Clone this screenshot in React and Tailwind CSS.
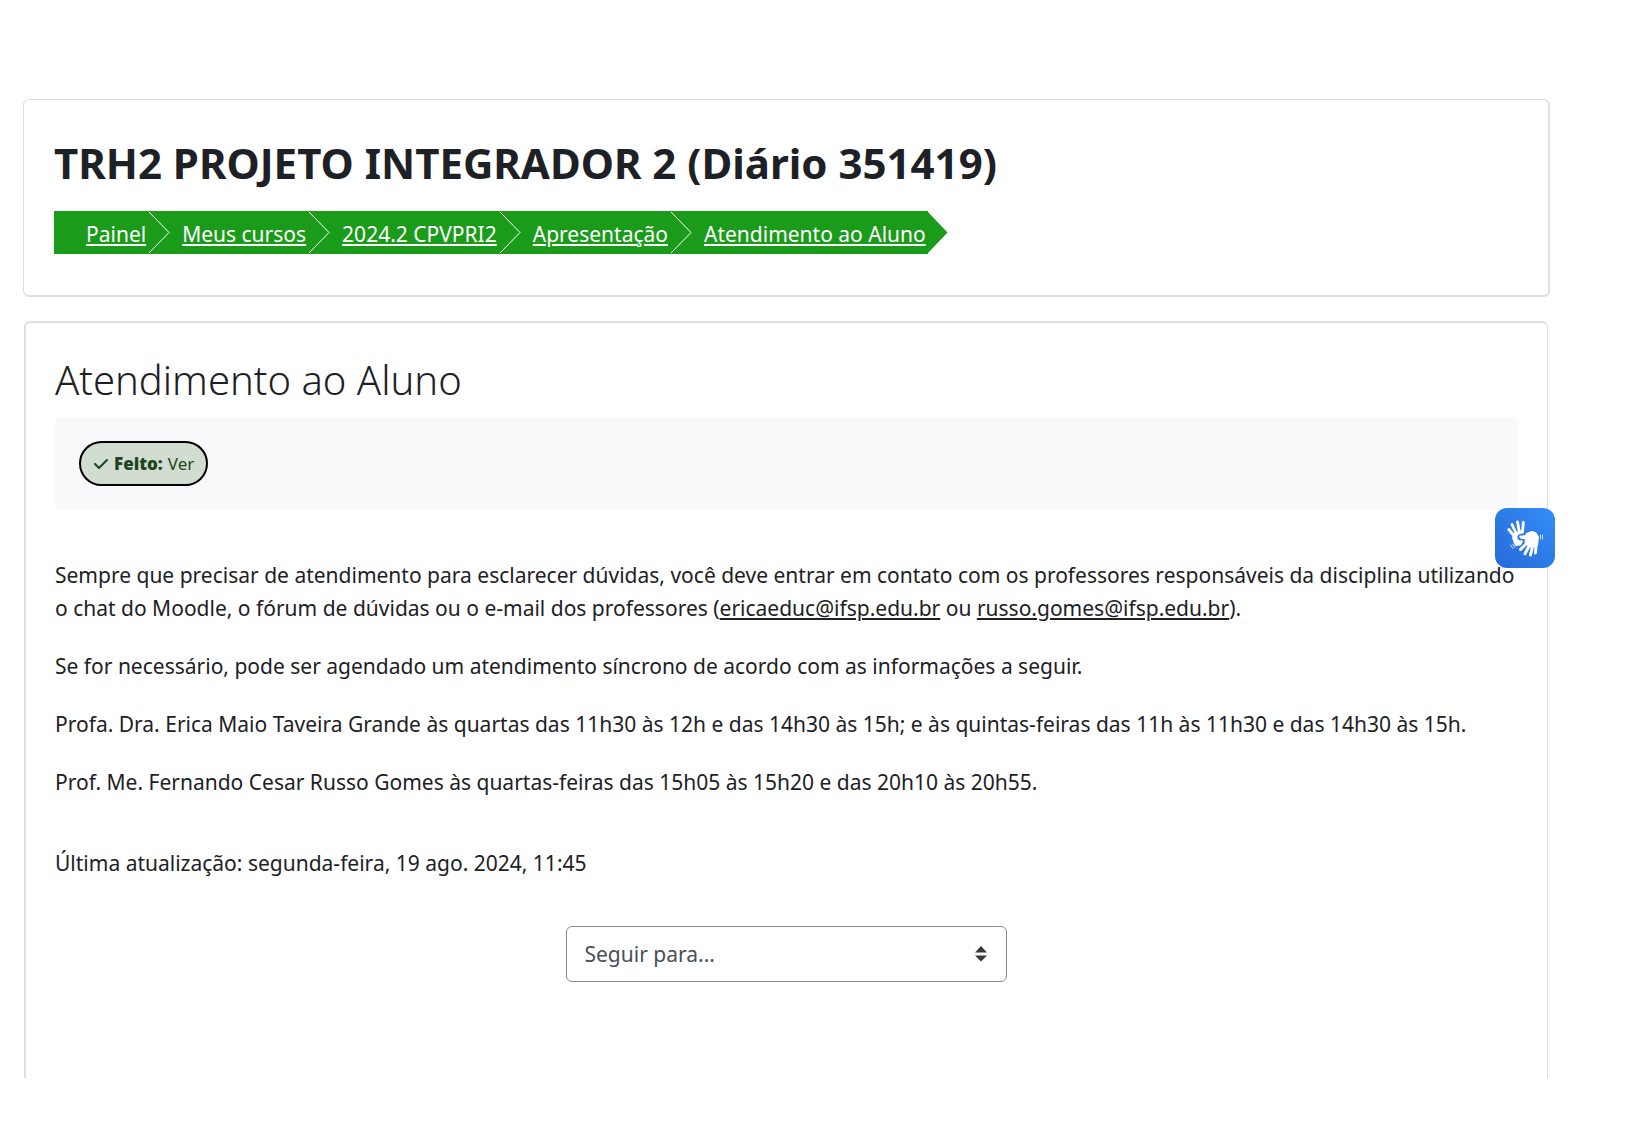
import { FaCheck } from "react-icons/fa6";

const crumbs = [
  "Painel",
  "Meus cursos",
  "2024.2 CPVPRI2",
  "Apresentação",
  "Atendimento ao Aluno",
];

const Breadcrumb = () => (
  <nav aria-label="Navegação" className="mt-[19px]">
    <ol className="flex">
      {crumbs.map((label, i) => (
        <li
          key={label}
          className={`flex h-[43px] bg-[#1a9c1a] text-white ${
            i === 0 ? "pl-8" : "pl-3"
          }`}
        >
          <a href="#" className="pt-[7px] underline">
            {label}
          </a>
          {i < crumbs.length - 1 ? (
            <svg width="21" height="43" viewBox="0 0 21 43" className="ml-[3px]">
              <path d="M0 1L20 21.5L0 42" fill="none" stroke="#fff" />
            </svg>
          ) : (
            <svg width="22" height="43" viewBox="0 0 22 43" className="-mr-5.5">
              <path d="M0 0H2V1L21.500 21.500L2 42V43H0z" fill="#1a9c1a" />
            </svg>
          )}
        </li>
      ))}
    </ol>
  </nav>
);

const CompletionInfo = () => (
  <div className="mt-3 flex rounded-md bg-[#f8f9fb] p-6">
    <span className="inline-flex h-[45px] items-center gap-[5px] rounded-full border-2 border-black bg-[#d2ddd2] px-3 text-[17px] text-[#1d4620]">
      <FaCheck className="text-base" />
      <strong className="font-black">Feito:</strong>
      <span>Ver</span>
    </span>
  </div>
);

const HandsIcon = () => (
  <svg
    viewBox="0 0 60 60"
    className="size-full"
    fill="none"
    strokeLinecap="round"
    strokeLinejoin="round"
  >
    <g stroke="#fff" strokeWidth="2.800">
      <path d="M13.800 21.500L20 29M17 16.500L21.500 26M22.500 13.800L24.500 25M28.300 14.500L27.500 25" />
      <path
        d="M20 26L27.500 23L28 30L25 36L21 36.500L18.500 30z"
        fill="#fff"
      />
    </g>
    <path
      d="M24.500 28.500L33 26L38 24L42.500 28L42 34L33 37L30 31L24.500 30z"
      stroke="#2b78e4"
      strokeWidth="4"
    />
    <g stroke="#fff" strokeWidth="3">
      <path d="M25.500 41.500L33 34M30 45.800L35 36M35.500 47L38 36M40.500 45L41 35" />
      <path
        d="M32 26.500L37 24.500L40.500 26L42.500 29L41.500 37L35 38L31 34L32 31z"
        fill="#fff"
      />
      <path
        d="M25 28.500L33 27.500L32 31L26 30z"
        fill="#fff"
        strokeWidth="1.500"
      />
    </g>
    <g stroke="#cfe2ff" strokeWidth="1">
      <path d="M45.500 27V31M47.500 27V31M15.500 37L18 40.500M17.500 36L20 39.500" />
    </g>
  </svg>
);

const JumpTo = () => (
  <div className="relative mx-auto mt-[46px] w-[441px]">
    <select
      aria-label="Seguir para..."
      className="block h-14 w-full appearance-none rounded-md border border-[#848b94] bg-white px-[18px] text-[#495057]"
    >
      <option>Seguir para...</option>
    </select>
    <svg
      viewBox="0 0 12 16"
      className="pointer-events-none absolute right-5 top-5 h-4 w-3"
      fill="#343a40"
    >
      <path d="M6 0L12 6.500H0zM6 15.500L0 9.500H12z" />
    </svg>
  </div>
);

const App = () => {
  return (
    <div className="bg-white pl-[23px] pr-[77px] pt-[99px] font-['Noto_Sans',sans-serif] text-[21px] leading-[33px] text-[#1d2125]">
      <header className="rounded-md border border-b-2 border-r-2 border-[#dedede] px-[30px] pb-[41px] pt-[34px]">
        <h1 className="text-[42px] font-bold leading-[58px]">
          TRH2 PROJETO INTEGRADOR 2 (Diário 351419)
        </h1>
        <Breadcrumb />
      </header>
      <main className="ml-px mr-0.5 mt-6 rounded-t-md border border-b-0 border-l-2 border-t-2 border-[#dedede] pb-24 pl-[29px] pr-[30px] pt-8">
        <h2 className="text-[40px] font-light leading-[50px]">
          Atendimento ao Aluno
        </h2>
        <CompletionInfo />
        <div className="mt-[49px] flex flex-col gap-[25px]">
          <p>
            Sempre que precisar de atendimento para esclarecer dúvidas, você
            deve entrar em contato com os professores responsáveis da disciplina
            utilizando o chat do Moodle, o fórum de dúvidas ou o e-mail dos
            professores (
            <a href="mailto:ericaeduc@ifsp.edu.br" className="underline">
              ericaeduc@ifsp.edu.br
            </a>{" "}
            ou{" "}
            <a href="mailto:russo.gomes@ifsp.edu.br" className="underline">
              russo.gomes@ifsp.edu.br
            </a>
            ).
          </p>
          <p>
            Se for necessário, pode ser agendado um atendimento síncrono de
            acordo com as informações a seguir.
          </p>
          <p>
            Profa. Dra. Erica Maio Taveira Grande às quartas das 11h30 às 12h e
            das 14h30 às 15h; e às quintas-feiras das 11h às 11h30 e das 14h30
            às 15h.
          </p>
          <p>
            Prof. Me. Fernando Cesar Russo Gomes às quartas-feiras das 15h05 às
            15h20 e das 20h10 às 20h55.
          </p>
        </div>
        <p className="mt-12">
          Última atualização: segunda-feira, 19 ago. 2024, 11:45
        </p>
        <JumpTo />
      </main>
      <button
        aria-label="Conteúdo acessível em Libras"
        className="fixed right-[72px] top-[508px] size-[60px] rounded-xl bg-linear-to-tr from-[#2769d8] to-[#338ef7]"
      >
        <HandsIcon />
      </button>
    </div>
  );
};

export default App;
